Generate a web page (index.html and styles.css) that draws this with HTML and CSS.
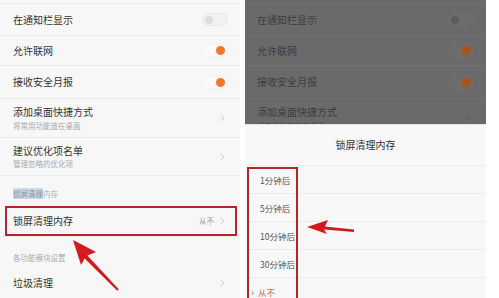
FILE: index.html
```html
<!DOCTYPE html>
<html lang="zh">
<head>
   <meta charset="UTF-8">
   <meta name="viewport" content="width=device-width, initial-scale=1.0">
   <title>锁屏清理内存</title>
   <link rel="stylesheet" href="styles.css">
</head>
<body class="body">
   <div class="screen">

      <!-- Left phone: settings list -->
      <section class="panel panel-left">
         <div class="row row-cut"></div>
         <div class="row row-a">
            <span class="label">在通知栏显示</span>
            <span class="toggle"><span class="knob"></span></span>
         </div>
         <div class="row row-b">
            <span class="label">允许联网</span>
            <span class="toggle on"><span class="knob"></span></span>
         </div>
         <div class="row row-c">
            <span class="label">接收安全月报</span>
            <span class="toggle on"><span class="knob"></span></span>
         </div>
         <div class="row row-d">
            <span class="stack">
               <span class="label">添加桌面快捷方式</span>
               <span class="sub">将常用功能放在桌面</span>
            </span>
            <svg class="chev" viewBox="0 0 5 8"><polyline points="1,1 4,4 1,7"/></svg>
         </div>
         <div class="row row-e">
            <span class="stack">
               <span class="label">建议优化项名单</span>
               <span class="sub">管理忽略的优化项</span>
            </span>
            <svg class="chev" viewBox="0 0 5 8"><polyline points="1,1 4,4 1,7"/></svg>
         </div>
         <div class="group group-a"><span class="mark">锁屏清理</span>内存</div>
         <div class="row row-f">
            <span class="label">锁屏清理内存</span>
            <span class="value">从不</span>
            <svg class="chev" viewBox="0 0 5 8"><polyline points="1,1 4,4 1,7"/></svg>
         </div>
         <div class="group group-b">各功能模块设置</div>
         <div class="row row-g">
            <span class="label">垃圾清理</span>
            <svg class="chev" viewBox="0 0 5 8"><polyline points="1,1 4,4 1,7"/></svg>
         </div>
      </section>

      <!-- Right phone: dimmed list with bottom sheet -->
      <section class="panel panel-right">
         <div class="dim">
            <div class="row row-cut"></div>
            <div class="row row-a">
               <span class="label">在通知栏显示</span>
               <span class="toggle"><span class="knob"></span></span>
            </div>
            <div class="row row-b">
               <span class="label">允许联网</span>
               <span class="toggle on"><span class="knob"></span></span>
            </div>
            <div class="row row-c">
               <span class="label">接收安全月报</span>
               <span class="toggle on"><span class="knob"></span></span>
            </div>
            <div class="row row-d">
               <span class="stack">
                  <span class="label">添加桌面快捷方式</span>
                  <span class="sub">将常用功能放在桌面</span>
               </span>
               <svg class="chev" viewBox="0 0 5 8"><polyline points="1,1 4,4 1,7"/></svg>
            </div>
         </div>
         <div class="sheet">
            <div class="sheet-title">锁屏清理内存</div>
            <div class="option">1分钟后</div>
            <div class="option">5分钟后</div>
            <div class="option">10分钟后</div>
            <div class="option">30分钟后</div>
            <div class="option selected"><span class="tick">›</span>从不</div>
         </div>
      </section>

      <!-- Annotations drawn over the screenshots -->
      <div class="frame frame-row"></div>
      <div class="frame frame-list"></div>
      <svg class="arrows" viewBox="0 0 499 298">
         <polygon points="73,240 96,252 87.4,255.6 118.7,289.3 117.3,290.7 84.6,258.4 81,265"/>
         <polygon points="307,227 328,220 325,226.5 354,229.5 354,232 324,229.5 327,234"/>
      </svg>
   </div>
</body>
</html>
```

FILE: styles.css
```css
:root {
   --color-text: #333333;
   --color-muted: #a8a8a8;
   --color-line: #ebebeb;
   --color-orange: #ef7a2b;
   --color-mark: #b3262c;
   --background-page: #f7f7f7;
   --background-dim: #6a6a6a;
}

.body { margin: 0; background-color: white; font-family: "Noto Sans CJK SC", "Noto Sans", sans-serif; color: var(--color-text); }
.screen { position: relative; display: flex; gap: 5px; width: 499px; height: 298px; overflow: hidden; }

.panel { width: 240px; height: 298px; overflow: hidden; background-color: var(--background-page); flex: none; }
.panel-right { width: 241px; display: flex; flex-direction: column; }

/* list rows */
.row { display: flex; align-items: center; gap: 6px; padding: 0 14px 0 13px; border-bottom: 1px solid var(--color-line); box-sizing: content-box; }
.row-cut { height: 3px; }
.row-a { height: 31px; }
.row-b { height: 29px; }
.row-c { height: 32px; }
.row-d { height: 38px; }
.row-e { height: 37px; }
.row-f { height: 30px; }
.row-g { height: 38px; border-bottom: none; }

.label { flex: 1; font-size: 10px; line-height: 12px; white-space: nowrap; }
.stack { flex: 1; display: flex; flex-direction: column; gap: 0; }
.stack .label { line-height: 14.5px; }
.sub { font-size: 7.5px; line-height: 11px; color: var(--color-muted); white-space: nowrap; }
.value { font-size: 7.5px; line-height: 10px; color: #999999; }
.chev { width: 5px; height: 8px; margin-right: 1px; fill: none; stroke: #c4c4c4; stroke-width: 0.9; }

.group { font-size: 7.5px; line-height: 10px; color: #ababab; padding: 13px 13px 7px; height: 10px; }
.group-b { padding-top: 16px; height: 4px; }
.mark { background-color: #cdd8e3; color: #8797a8; }

/* switches */
.toggle { display: flex; align-items: center; width: 20px; height: 11px; padding: 0 2px; border: 1px solid #e8e8e8; border-radius: 7px; background-color: #f1f1f1; margin-right: -2px; }
.toggle .knob { width: 8px; height: 8px; border-radius: 50%; background-color: #dedede; }
.toggle.on { justify-content: flex-end; background-color: #fbfbfb; border-color: #f1f1f1; }
.toggle.on .knob { width: 9px; height: 9px; background-color: var(--color-orange); }

/* dimmed copy behind the sheet */
.dim { height: 124px; overflow: hidden; background-color: var(--background-dim); flex: none; }
.dim .row { border-bottom-color: #727272; padding-left: 12px; }
.dim .label { color: #3d3d3d; }
.dim .sub { color: #4a4a4a; }
.dim .toggle { background-color: #6c6c6c; border-color: #707070; }
.dim .toggle .knob { background-color: #5d5d5d; }
.dim .toggle.on .knob { background-color: #a8521d; }
.dim .chev { stroke: #555555; }

/* bottom sheet */
.sheet { flex: 1; background-color: #f8f8f8; border-top: 1px solid #e4e4e4; }
.sheet-title { height: 40px; display: flex; align-items: center; justify-content: center; font-size: 10px; line-height: 12px; border-bottom: 1px solid var(--color-line); }
.option { height: 27px; display: flex; align-items: center; padding-left: 15px; font-size: 8.5px; color: #555555; border-bottom: 1px solid var(--color-line); }
.option.selected { padding-left: 6px; color: #c0703a; }
.tick { font-size: 10px; margin-right: 4px; color: #c0703a; }

/* annotation overlays */
.frame { position: absolute; border: 2px solid var(--color-mark); box-sizing: border-box; }
.frame-row { left: 5px; top: 206px; width: 232px; height: 30px; }
.frame-list { left: 247px; top: 167px; width: 51px; height: 140px; }
.arrows { position: absolute; left: 0; top: 0; width: 499px; height: 298px; fill: #d41a1f; }
```
